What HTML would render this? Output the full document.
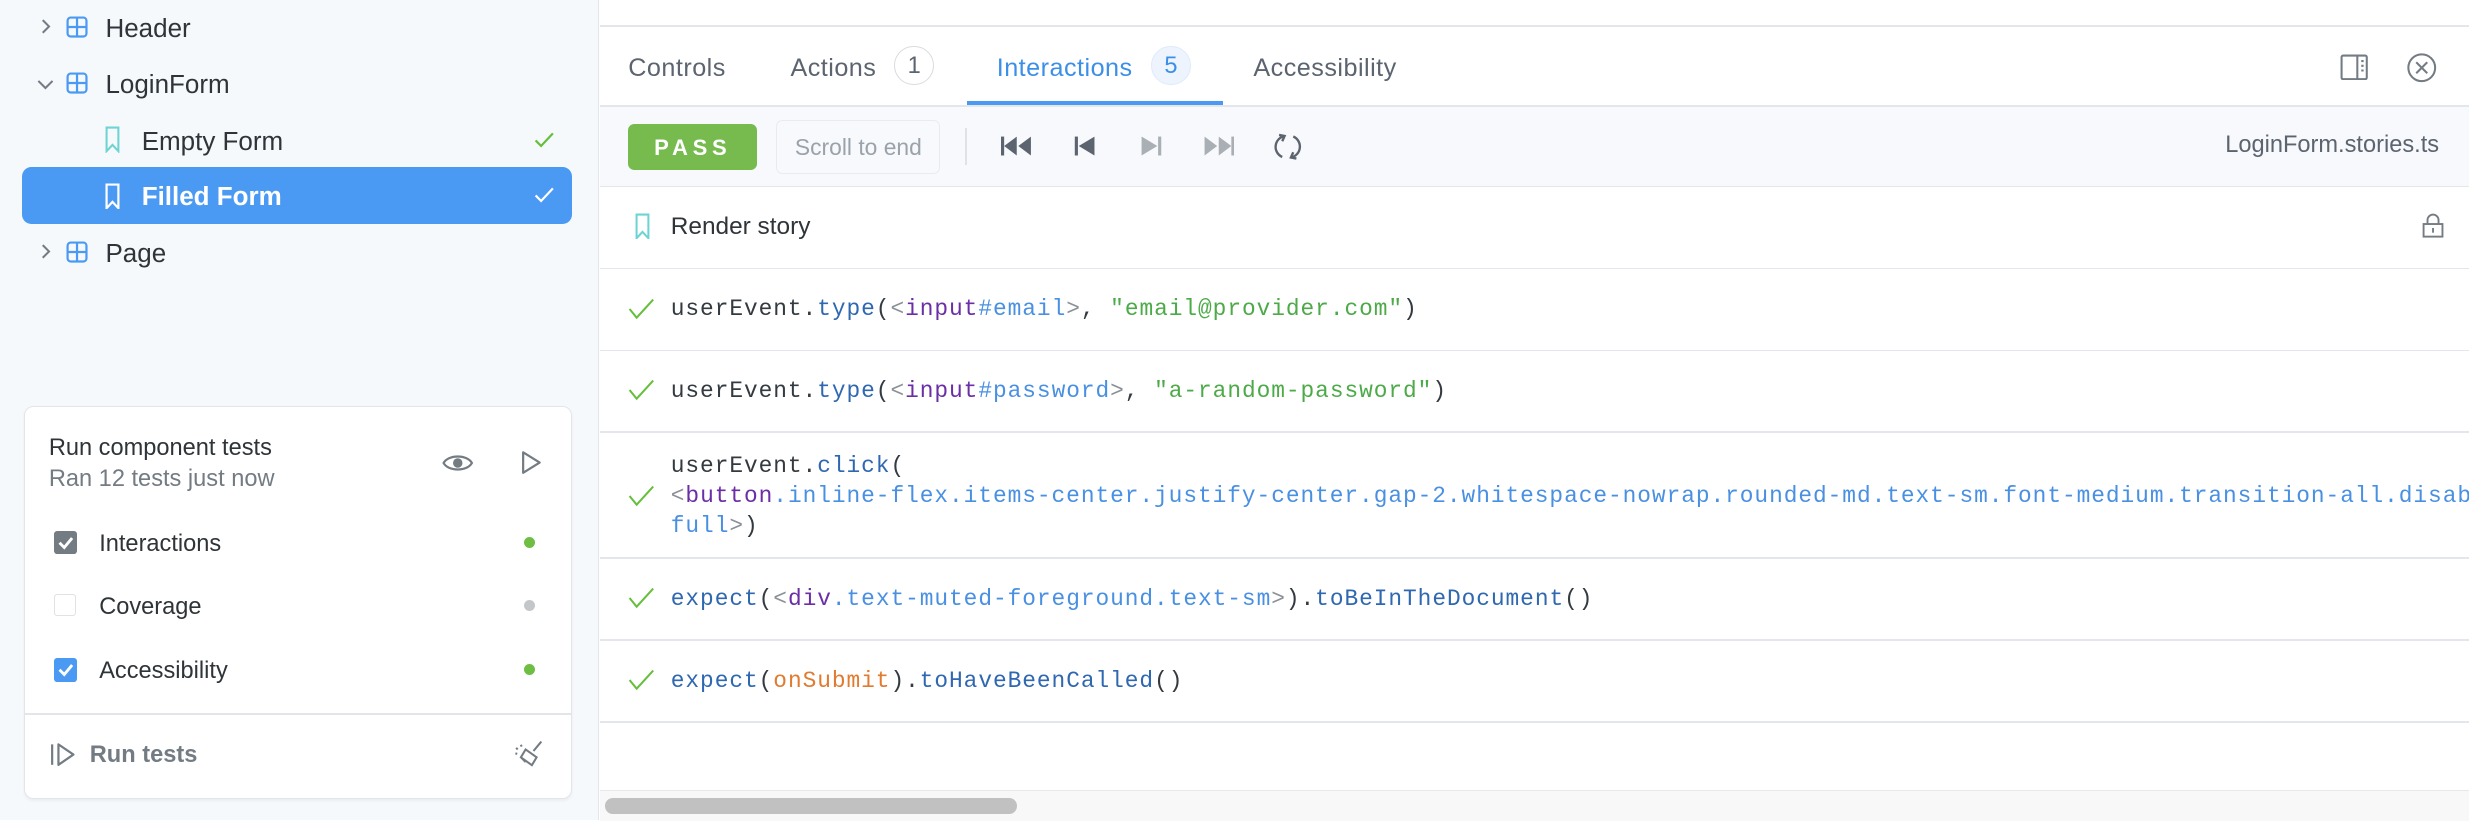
<!DOCTYPE html>
<html><head><meta charset="utf-8">
<style>
html{zoom:1.5746}
body{margin:0;width:1568px;height:521px;overflow:hidden;position:relative;font-family:"Liberation Sans",sans-serif;background:#fff;color:#2e3438}
.abs{position:absolute}
.side{left:0;top:0;width:380px;height:521px;background:#f6f9fc;border-right:1px solid #e3e7ec}
.tree{font-size:16.5px;color:#2e3438;white-space:nowrap}
.sel{left:14px;top:106px;width:349px;height:36px;background:#4a9af3;border-radius:6px}
.card{left:15px;top:258px;width:347px;height:248px;background:#fff;border:1px solid #e2e6ea;border-radius:6px;box-shadow:0 1px 2px rgba(0,0,0,.05)}
.cb{width:15px;height:15px;border-radius:2px}
.dot{width:7px;height:7px;border-radius:50%}
.mono{font-family:"Liberation Mono",monospace;font-size:14.5px;letter-spacing:0.6px;white-space:nowrap}
.hl{height:1px;background:#e3e7ec;left:381px;width:1187px}
.d{color:#333a40}.m{color:#2f68b0}.g{color:#8a9096}.t{color:#6b2ea6}.s{color:#4a90e2}.str{color:#4daa48}.o{color:#e07b30}
.ck{left:399px}
.tab{font-size:16px;color:#5c6470;letter-spacing:.3px}
</style></head><body>
<div class="abs side"></div>
<svg class="abs" style="left:24px;top:11px" width="10" height="12"><path d="M3 2l4 4-4 4" fill="none" stroke="#737b83" stroke-width="1.3"/></svg>
<svg class="abs" style="left:23px;top:49px" width="12" height="10"><path d="M1.5 2.5l4.5 4.5 4.5-4.5" fill="none" stroke="#737b83" stroke-width="1.3"/></svg>
<svg class="abs" style="left:24px;top:154px" width="10" height="12"><path d="M3 2l4 4-4 4" fill="none" stroke="#737b83" stroke-width="1.3"/></svg>
<svg class="abs" style="left:42px;top:10px" width="14" height="14"><rect x="1" y="1" width="12" height="12" rx="2" fill="none" stroke="#4a9af3" stroke-width="1.4"/><path d="M7 1v12M1 7h12" stroke="#4a9af3" stroke-width="1.4"/></svg>
<svg class="abs" style="left:42px;top:46px" width="14" height="14"><rect x="1" y="1" width="12" height="12" rx="2" fill="none" stroke="#4a9af3" stroke-width="1.4"/><path d="M7 1v12M1 7h12" stroke="#4a9af3" stroke-width="1.4"/></svg>
<svg class="abs" style="left:42px;top:153px" width="14" height="14"><rect x="1" y="1" width="12" height="12" rx="2" fill="none" stroke="#4a9af3" stroke-width="1.4"/><path d="M7 1v12M1 7h12" stroke="#4a9af3" stroke-width="1.4"/></svg>
<div class="abs tree" style="left:67px;top:8px">Header</div>
<div class="abs tree" style="left:67px;top:44px">LoginForm</div>
<svg class="abs" style="left:67px;top:80px" width="10" height="17"><path d="M1 1h7.5v15L4.75 12 1 16z" fill="none" stroke="#6ed3d3" stroke-width="1.3"/></svg>
<div class="abs tree" style="left:90px;top:80px">Empty Form</div>
<svg class="abs" style="left:339px;top:83px" width="13" height="11"><path d="M1 6l3.5 3.5L12 1.5" fill="none" stroke="#66bf3c" stroke-width="1.4"/></svg>
<div class="abs sel"></div>
<svg class="abs" style="left:67px;top:116px" width="10" height="17"><path d="M1 1h7.5v15L4.75 12 1 16z" fill="none" stroke="#fff" stroke-width="1.4"/></svg>
<div class="abs tree" style="left:90px;top:115px;color:#fff;font-weight:bold">Filled Form</div>
<svg class="abs" style="left:339px;top:118px" width="13" height="11"><path d="M1 6l3.5 3.5L12 1.5" fill="none" stroke="#fff" stroke-width="1.4"/></svg>
<div class="abs tree" style="left:67px;top:151px">Page</div>
<div class="abs card"></div>
<div class="abs" style="left:31px;top:276px;font-size:15px;color:#2e3438">Run component tests</div>
<div class="abs" style="left:31px;top:296px;font-size:15px;color:#737b83">Ran 12 tests just now</div>
<svg class="abs" style="left:281px;top:287px" width="20" height="14"><path d="M1 7C4 1.5 16 1.5 19 7 16 12.5 4 12.5 1 7z" fill="none" stroke="#737b83" stroke-width="1.4"/><circle cx="10" cy="7" r="3" fill="#737b83"/></svg>
<svg class="abs" style="left:330px;top:286px" width="14" height="16"><path d="M2 1.5L12.5 8 2 14.5z" fill="none" stroke="#737b83" stroke-width="1.4" stroke-linejoin="round"/></svg>
<div class="abs cb" style="left:34px;top:337px;background:#737b83"></div>
<svg class="abs" style="left:34px;top:337px" width="15" height="15"><path d="M3.5 7.5l3 3L11.5 4.5" fill="none" stroke="#fff" stroke-width="1.8"/></svg>
<div class="abs" style="left:63px;top:337px;font-size:15px">Interactions</div>
<div class="abs dot" style="left:333px;top:341px;background:#6fbe44"></div>
<div class="abs cb" style="left:34px;top:377px;border:1px solid #dfe3e7;width:13px;height:13px"></div>
<div class="abs" style="left:63px;top:377px;font-size:15px">Coverage</div>
<div class="abs dot" style="left:333px;top:381px;background:#c4c7ca"></div>
<div class="abs cb" style="left:34px;top:418px;background:#4a9af3"></div>
<svg class="abs" style="left:34px;top:418px" width="15" height="15"><path d="M3.5 7.5l3 3L11.5 4.5" fill="none" stroke="#fff" stroke-width="1.8"/></svg>
<div class="abs" style="left:63px;top:418px;font-size:15px">Accessibility</div>
<div class="abs dot" style="left:333px;top:422px;background:#6fbe44"></div>
<div class="abs" style="left:16px;top:453px;width:347px;height:1px;background:#e2e6ea"></div>
<svg class="abs" style="left:31px;top:471px" width="18" height="16"><path d="M2 1.5v13" stroke="#737b83" stroke-width="1.4"/><path d="M6 1.5L15.5 8 6 14.5z" fill="none" stroke="#737b83" stroke-width="1.4" stroke-linejoin="round"/></svg>
<div class="abs" style="left:57px;top:471px;font-size:15px;font-weight:bold;color:#737b83">Run tests</div>
<svg class="abs" style="left:326px;top:470px" width="20" height="18"><path d="M18 1l-5 6M8 6l7 5-3 5-7-5zM5 11l3 3M2 5l1 1M5 3l.5 1.2M1.5 8.5l1.2.3" fill="none" stroke="#737b83" stroke-width="1.3"/></svg>
<div class="abs hl" style="top:16px"></div>
<div class="abs tab" style="left:399px;top:34px">Controls</div>
<div class="abs tab" style="left:502px;top:34px">Actions</div>
<div class="abs" style="left:568px;top:29px;width:24px;height:24px;border:1px solid #d8dce0;border-radius:50%;text-align:center;line-height:25px;font-size:15px;color:#5c6470">1</div>
<div class="abs tab" style="left:633px;top:34px;color:#3b8fe8">Interactions</div>
<div class="abs" style="left:731px;top:29px;width:24px;height:24px;border:1px solid #dfeafb;background:#eef4fd;border-radius:50%;text-align:center;line-height:25px;font-size:15px;color:#3b8fe8">5</div>
<div class="abs tab" style="left:796px;top:34px">Accessibility</div>
<div class="abs" style="left:614px;top:64px;width:163px;height:3px;background:#4a9af3"></div>
<svg class="abs" style="left:1486px;top:34px" width="18" height="17"><rect x="1" y="1" width="16" height="15" rx="1" fill="none" stroke="#737b83" stroke-width="1.3"/><path d="M11 1v15M13.5 4.5h1.5M13.5 7.5h1.5M13.5 10.5h1.5" stroke="#737b83" stroke-width="1.3"/></svg>
<svg class="abs" style="left:1528px;top:33px" width="20" height="20"><circle cx="10" cy="10" r="8.5" fill="none" stroke="#737b83" stroke-width="1.3"/><path d="M6.5 6.5l7 7M13.5 6.5l-7 7" stroke="#737b83" stroke-width="1.3"/></svg>
<div class="abs hl" style="top:67px"></div>
<div class="abs" style="left:381px;top:68px;width:1187px;height:50px;background:#f7f9fc"></div>
<div class="abs" style="left:399px;top:79px;width:82px;height:29px;background:#77bb4f;border-radius:4px;color:#fff;font-size:14px;font-weight:bold;letter-spacing:3px;text-align:center;line-height:30px">PASS</div>
<div class="abs" style="left:493px;top:76px;width:103px;height:33px;border:1px solid #e8ecf0;border-radius:4px;color:#9aa2aa;font-size:14.5px;text-align:center;line-height:34px;white-space:nowrap">Scroll to end</div>
<div class="abs" style="left:613px;top:81px;width:1px;height:24px;background:#dfe3e7"></div>
<svg class="abs" style="left:636px;top:86px" width="20" height="14"><path d="M1 1v12" stroke="#5c6470" stroke-width="2"/><path d="M10 1v12L2 7zM19 1v12l-8-6z" fill="#5c6470"/></svg>
<svg class="abs" style="left:682px;top:86px" width="14" height="14"><path d="M1.5 1v12" stroke="#5c6470" stroke-width="2"/><path d="M13 1v12L3 7z" fill="#5c6470"/></svg>
<svg class="abs" style="left:724px;top:86px" width="14" height="14"><path d="M12.5 1v12" stroke="#a9afb4" stroke-width="2"/><path d="M1 1v12l10-6z" fill="#a9afb4"/></svg>
<svg class="abs" style="left:764px;top:86px" width="20" height="14"><path d="M19 1v12" stroke="#a9afb4" stroke-width="2"/><path d="M1 1v12l8-6zM10 1v12l8-6z" fill="#a9afb4"/></svg>
<svg class="abs" style="left:808px;top:83px" width="20" height="20"><path d="M8 3.2A7 7 0 0 0 6.5 16.5M12 16.8A7 7 0 0 0 13.5 3.5" fill="none" stroke="#5c6470" stroke-width="1.5"/><path d="M4.5 2.5L8 3.2 6.5 6.5M15.5 17.5L12 16.8 13.5 13.5" fill="none" stroke="#5c6470" stroke-width="1.5"/></svg>
<div class="abs" style="right:19px;top:84px;font-size:15px;color:#5c6470">LoginForm.stories.ts</div>
<div class="abs hl" style="top:118px"></div>
<svg class="abs" style="left:403px;top:135px" width="10" height="17"><path d="M1 1h7.5v15L4.75 12 1 16z" fill="none" stroke="#6ed3d3" stroke-width="1.3"/></svg>
<div class="abs" style="left:426px;top:135px;font-size:15.5px;color:#2e3438">Render story</div>
<svg class="abs" style="left:1538px;top:135px" width="14" height="16"><path d="M3.5 7V4.5a3.5 3.5 0 0 1 7 0V7" fill="none" stroke="#737b83" stroke-width="1.2"/><rect x="1" y="7" width="12" height="8" fill="none" stroke="#737b83" stroke-width="1.2"/><path d="M7 9.5v3" stroke="#737b83" stroke-width="1.2"/></svg>
<div class="abs hl" style="top:170px"></div>
<svg class="abs ck" style="top:189px" width="17" height="14"><path d="M1 7l4.5 5.5L16 1" fill="none" stroke="#66bf3c" stroke-width="1.3"/></svg>
<div class="abs mono" style="left:426px;top:188px"><span class="d">userEvent.</span><span class="m">type</span><span class="d">(</span><span class="g">&lt;</span><span class="t">input</span><span class="s">#email</span><span class="g">&gt;</span><span class="d">, </span><span class="str">"email@provider.com"</span><span class="d">)</span></div>
<div class="abs hl" style="top:222px"></div>
<svg class="abs ck" style="top:241px" width="17" height="14"><path d="M1 7l4.5 5.5L16 1" fill="none" stroke="#66bf3c" stroke-width="1.3"/></svg>
<div class="abs mono" style="left:426px;top:240px"><span class="d">userEvent.</span><span class="m">type</span><span class="d">(</span><span class="g">&lt;</span><span class="t">input</span><span class="s">#password</span><span class="g">&gt;</span><span class="d">, </span><span class="str">"a-random-password"</span><span class="d">)</span></div>
<div class="abs hl" style="top:274px"></div>
<svg class="abs ck" style="top:308px" width="17" height="14"><path d="M1 7l4.5 5.5L16 1" fill="none" stroke="#66bf3c" stroke-width="1.3"/></svg>
<div class="abs mono" style="left:426px;top:287px;line-height:19px;width:1142px;overflow:hidden"><span class="d">userEvent.</span><span class="m">click</span><span class="d">(</span><br><span class="g">&lt;</span><span class="t">button</span><span class="s">.inline-flex.items-center.justify-center.gap-2.whitespace-nowrap.rounded-md.text-sm.font-medium.transition-all.disabled:pointer-events-none.w-</span><br><span class="s">full</span><span class="g">&gt;</span><span class="d">)</span></div>
<div class="abs hl" style="top:354px"></div>
<svg class="abs ck" style="top:373px" width="17" height="14"><path d="M1 7l4.5 5.5L16 1" fill="none" stroke="#66bf3c" stroke-width="1.3"/></svg>
<div class="abs mono" style="left:426px;top:372px"><span class="m">expect</span><span class="d">(</span><span class="g">&lt;</span><span class="t">div</span><span class="s">.text-muted-foreground.text-sm</span><span class="g">&gt;</span><span class="d">).</span><span class="m">toBeInTheDocument</span><span class="d">()</span></div>
<div class="abs hl" style="top:406px"></div>
<svg class="abs ck" style="top:425px" width="17" height="14"><path d="M1 7l4.5 5.5L16 1" fill="none" stroke="#66bf3c" stroke-width="1.3"/></svg>
<div class="abs mono" style="left:426px;top:424px"><span class="m">expect</span><span class="d">(</span><span class="o">onSubmit</span><span class="d">).</span><span class="m">toHaveBeenCalled</span><span class="d">()</span></div>
<div class="abs hl" style="top:458px"></div>
<div class="abs" style="left:381px;top:502px;width:1187px;height:19px;background:#f8f8f8;border-top:1px solid #e6e8ea"></div>
<div class="abs" style="left:384px;top:507px;width:262px;height:10px;background:#c1c1c1;border-radius:5px"></div>
</body></html>
